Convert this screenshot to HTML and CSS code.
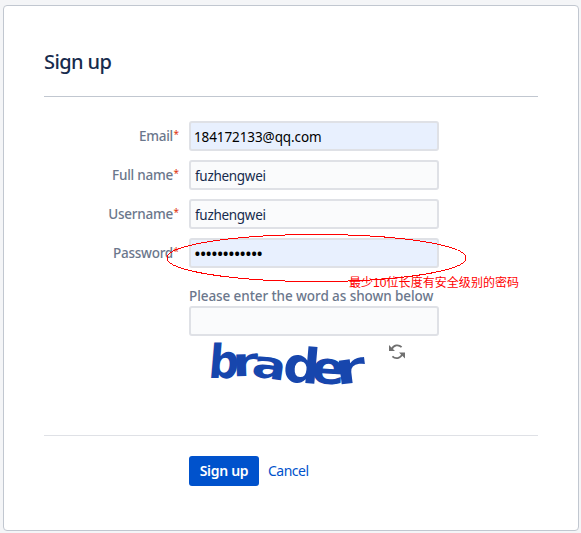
FILE: index.html
```html
<!DOCTYPE html>
<html lang="en">
<head>
<meta charset="utf-8">
<title>Sign up</title>
<link rel="stylesheet" href="styles.css">
</head>
<body>
<main class="card">
  <h1 class="title">Sign up</h1>
  <form class="form">
    <div class="row">
      <label class="label" for="email">Email<span class="req">*</span></label>
      <input class="field filled f-email" id="email" type="text" value="184172133@qq.com">
    </div>
    <div class="row">
      <label class="label" for="fullname">Full name<span class="req">*</span></label>
      <input class="field f-name" id="fullname" type="text" value="fuzhengwei">
    </div>
    <div class="row">
      <label class="label" for="username">Username<span class="req">*</span></label>
      <input class="field f-name" id="username" type="text" value="fuzhengwei">
    </div>
    <div class="row">
      <label class="label" for="password">Password<span class="req">*</span></label>
      <div class="field filled dots" id="password">••••••••••••</div>
    </div>
    <div class="captcha">
      <label class="captcha-label" for="word">Please enter the word as shown below</label>
      <input class="field" id="word" type="text">
      <div class="captcha-row">
        <svg class="word" width="200" height="50" viewBox="0 0 200 50">
          <text transform="translate(18.500 39.500) skewX(-5) scale(1.120 1.230)">b</text>
          <text transform="translate(43.500 38.500) rotate(-2) scale(1.400 1.050)">r</text>
          <text transform="translate(61.500 38) rotate(8) scale(1.350 1)">a</text>
          <text transform="translate(93 43) rotate(5) scale(1.350 1.280)">d</text>
          <text transform="translate(121.500 44.500) rotate(4) scale(1.300 1.180)">e</text>
          <text transform="translate(147.500 47) rotate(-7) scale(1.650 1.150)">r</text>
        </svg>
        <svg class="refresh" width="16" height="16" viewBox="0 0 16 16">
          <path d="M2.600 5.500C4.500.8 9.600.2 12.600 3.200M13.400 10C11.500 14.700 6.400 15.300 3.400 12.300" fill="none" stroke="#707070" stroke-width="1.800"/>
          <path d="M0 1V7H6ZM16 14.500V8.500H10Z" fill="#707070"/>
        </svg>
      </div>
    </div>
    <div class="actions">
      <button class="submit" type="button">Sign up</button>
      <a class="cancel">Cancel</a>
    </div>
  </form>
</main>
<svg class="ellipse" width="302" height="50" viewBox="0 0 302 50"><ellipse cx="150.500" cy="25" rx="149.500" ry="23.500"/></svg>
<div class="note">最少10位长度有安全级别的密码</div>
</body>
</html>
```
FILE: styles.css
```css
* { box-sizing: border-box; }
body {
  margin: 0;
  padding: 5px 2px 2px 3px;
  height: 533px;
  position: relative;
  overflow: hidden;
  background: #f4f5f7;
  color: #172b4d;
  font: 14px/20px "Noto Sans", sans-serif;
}
.card {
  height: 526px;
  padding: 0 40px;
  background: #fff;
  border: 1px solid #c1c7d0;
  border-radius: 4px;
}
.title {
  margin: 0;
  height: 91px;
  padding-top: 42px;
  border-bottom: 1px solid #c1c7d0;
  font-size: 20px;
  line-height: 28px;
  font-weight: 500;
  letter-spacing: -.6px;
}
.form { padding-top: 24px; }
.row { display: flex; height: 30px; margin-bottom: 9px; }
.label {
  width: 135px;
  margin-right: 10px;
  padding-top: 5px;
  text-align: right;
  white-space: nowrap;
  color: #6b778c;
  font-size: 13.5px;
  font-weight: 500;
  letter-spacing: -.25px;
}
.req { position: relative; top: -3px; margin-left: .5px; color: #de350b; font-weight: 400; font-size: 10px; line-height: 1px; letter-spacing: 0; }
.field {
  display: block;
  width: 250px;
  height: 30px;
  margin: 0;
  padding: 2px 4px 0;
  border: 2px solid #dfe1e6;
  border-radius: 3px;
  background: #fafbfc;
  color: #172b4d;
  font: 13.5px/20px "Noto Sans", sans-serif;
}
.filled { background: #e8f0fe; color: #000; }
.f-email { letter-spacing: -.1px; padding-left: 3px; }
.f-name { letter-spacing: -.3px; }
.dots { font-size: 18px; letter-spacing: -1.1px; padding: 3px 0 0 3px; }
.captcha { margin-left: 145px; padding-top: 9px; }
.captcha-label { display: block; height: 20px; color: #6b778c; font-size: 13.5px; font-weight: 500; line-height: 20px; letter-spacing: -.08px; white-space: nowrap; }
.captcha-row { display: flex; height: 50px; padding-top: 2px; }
.word { overflow: visible; }
.word text { font: bold 38px "DejaVu Sans", sans-serif; fill: #1746ad; }
.refresh { margin-top: 6px; }
.actions {
  display: flex;
  margin-top: 49px;
  border-top: 1px solid #dfe1e6;
  padding: 20px 0 0 145px;
}
.submit {
  width: 70px;
  height: 30px;
  padding: 0;
  border: 0;
  border-radius: 3px;
  background: #0052cc;
  color: #fff;
  font: 600 14px/30px "Noto Sans", sans-serif;
  letter-spacing: -.3px;
}
.cancel { margin-left: 9px; line-height: 30px; letter-spacing: -.5px; color: #0052cc; }
.ellipse { position: absolute; left: 166px; top: 233px; }
.ellipse ellipse { fill: none; stroke: #f00; stroke-width: 1; shape-rendering: crispEdges; }
.note {
  position: absolute;
  left: 349px;
  top: 274px;
  color: #f00;
  font: 12px/18px "Liberation Sans", "Noto Sans CJK SC", sans-serif;
  letter-spacing: .05px;
  white-space: nowrap;
}
```
